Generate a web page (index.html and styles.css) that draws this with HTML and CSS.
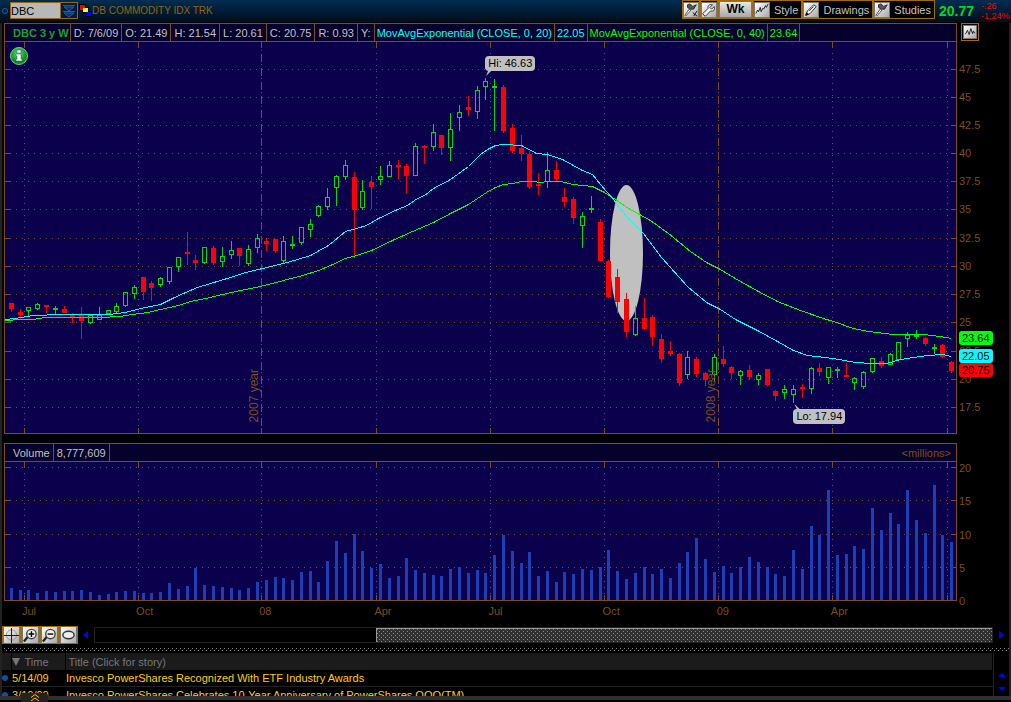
FILE: index.html
```html
<!DOCTYPE html>
<html lang="en">
<head>
<meta charset="utf-8">
<title>DBC Chart</title>
<link rel="stylesheet" href="styles.css">
</head>
<body>
<header class="toolbar">
  <span class="link-dot"></span>
  <div class="symbol">
    <input class="symbol-input" type="text" value="DBC" aria-label="Symbol">
    <button class="symbol-drop" aria-label="Symbol list"><svg width="14" height="14" viewBox="0 0 14 14"><path d="M1 1.500h12M1 7.500h12" stroke="#1560b0"/><path d="M2 3h10L7 7zM2 9h10l-5 4z" fill="#0a3468" stroke="#1560b0"/></svg></button>
  </div>
  <svg class="flag" width="13" height="13" viewBox="0 0 13 13"><path d="M0 0h7v3h3v4h3v6H6V9H3V6H0z"/><path fill="#f00" d="M1 1h5v5H1z"/><path fill="#ff0" d="M4 4h5v4H4z"/><path fill="#00f" d="M7 8h5v4H7z"/><path fill="#f00" d="M1 1h5v3H4v2H1z"/></svg>
  <span class="name">DB COMMODITY IDX TRK</span>
  <div class="tools">
    <button class="tool" aria-label="Chart settings"><svg class="face" width="16" height="16" viewBox="0 0 16 16"><use href="#brush"/><path d="M10 11l5 4M11 15l4-6" stroke="#000"/></svg></button>
    <button class="tool" aria-label="Properties"><svg class="face" width="16" height="16" viewBox="0 0 16 16"><path d="M2 14l-1-2 6-6c-1-3 2-5 5-4l-3 3 2 2 3-3c1 4-1 6-4 5l-6 6z" fill="#eee" stroke="#222"/></svg></button>
    <button class="tool wk"><span>Wk</span></button>
    <button class="tool"><svg class="face" width="16" height="16" viewBox="0 0 16 16"><path d="M1 12l2-4 1 2 2-5 1 5 2-4 1 1 2-4 1 2 2-4" fill="none" stroke="#111"/></svg><span>Style</span></button>
    <button class="tool"><svg class="face" width="16" height="16" viewBox="0 0 16 16"><path d="M2 14l2-5 7-7 3 2-7 8z" fill="#f4f4f4" stroke="#222"/><path d="M2 14l1-3 2 2zM6 9l5-5" stroke="#111"/></svg><span>Drawings</span></button>
    <button class="tool"><svg class="face" width="16" height="16" viewBox="0 0 16 16"><g id="brush"><path d="M4 2l3-1 3 3 4-2-3 5-4 0-3-2z" fill="#555" stroke="#222"/><path d="M6 7l-5 7 1 1 6-7z" fill="#fff" stroke="#444"/></g></svg><span>Studies</span></button>
  </div>
  <span class="last">20.77</span>
  <span class="change"><span>-.26</span><span>-1.24%</span></span>
</header>

<main class="workspace">
  <section class="row">
    <div class="panel">
      <div class="legend">
        <b class="title">DBC 3 y W</b><span>D: 7/6/09</span><span>O: 21.49</span><span>H: 21.54</span><span>L: 20.61</span><span>C: 20.75</span><span>R: 0.93</span><span>Y:</span><span class="cyan">MovAvgExponential (CLOSE, 0, 20)</span><span class="cyan">22.05</span><span class="green">MovAvgExponential (CLOSE, 0, 40)</span><span class="green">23.64</span>
      </div>
      <div class="plot price">
        <svg id="price" viewBox="5 42 951 391" preserveAspectRatio="none"></svg>
        <span class="year y07">2007 year</span>
        <span class="year y08">2008 year</span>
        <svg class="info" width="18" height="18" viewBox="0 0 18 18"><defs><radialGradient id="g" cx=".45" cy=".35"><stop offset="0" stop-color="#5fe070"/><stop offset="1" stop-color="#0a8a20"/></radialGradient></defs><circle cx="9" cy="9" r="8.500" fill="url(#g)" stroke="#6fd080"/><path d="M7 3h4v3H7zM6 7h5v5h1v2H6v-2h1V9H6z" fill="#fff" stroke="#064" stroke-width=".5"/></svg>
        <span class="note hi">Hi: 46.63</span>
        <span class="note lo">Lo: 17.94</span>
      </div>
    </div>
    <div class="axis">
      <button class="tool corner" aria-label="Chart style"><svg class="face" width="14" height="14" viewBox="0 0 14 14"><path d="M1 9h1l2-4 2 5 2-7 2 6 1-3 1 2h1" fill="none" stroke="#111"/></svg></button>
      <svg id="price-axis" width="52" height="391" viewBox="957 42 52 391"></svg>
    </div>
  </section>

  <section class="row volume-row">
    <div class="panel">
      <div class="legend volume-legend"><span>Volume</span><span>8,777,609</span><span class="unit">&lt;millions&gt;</span></div>
      <div class="plot volume"><svg id="volume" viewBox="5 462 951 138" preserveAspectRatio="none"></svg></div>
    </div>
    <div class="axis"><svg id="volume-axis" width="52" height="158" viewBox="957 443 52 158"></svg></div>
  </section>

  <div class="months"><span>Jul</span><span>Oct</span><span>08</span><span>Apr</span><span>Jul</span><span>Oct</span><span>09</span><span>Apr</span></div>

  <div class="scroller">
    <button class="tool small" aria-label="Crosshair"><svg class="face" width="17" height="16" viewBox="0 0 16 16"><circle cx="8" cy="8" r="5.500" fill="none" stroke="#999"/><path d="M8 0v16M0 8h16" stroke="#111" shape-rendering="crispEdges"/></svg></button>
    <button class="tool small" aria-label="Zoom in"><svg class="face" width="17" height="16" viewBox="0 0 16 16"><path d="M1 15l4-5" stroke="#222" stroke-width="2.500"/><circle cx="9" cy="7" r="5" fill="#eee" stroke="#444" stroke-width="1.500"/><path d="M6 7h6M9 4v6" stroke="#000" stroke-width="1.500"/></svg></button>
    <button class="tool small" aria-label="Zoom out"><svg class="face" width="17" height="16" viewBox="0 0 16 16"><path d="M1 15l4-5" stroke="#222" stroke-width="2.500"/><circle cx="9" cy="7" r="5" fill="#eee" stroke="#444" stroke-width="1.500"/><path d="M6 7h6" stroke="#000" stroke-width="1.500"/></svg></button>
    <button class="tool small" aria-label="Fit"><svg class="face" width="17" height="16" viewBox="0 0 16 16"><ellipse cx="8" cy="8" rx="6" ry="4" fill="#eee" stroke="#333" stroke-width="1.500"/></svg></button>
    <button class="arrow" aria-label="Scroll left"><svg width="6" height="8" viewBox="0 0 6 8"><path d="M5 0v8L0 4z" fill="#00f"/></svg></button>
    <div class="track"><svg class="thumb"><defs><pattern id="dots" width="4" height="4" patternUnits="userSpaceOnUse"><path fill="#888" d="M0 0h1v1H0zM2 2h1v1H2z"/></pattern></defs><rect width="100%" height="100%" fill="url(#dots)"/></svg></div>
    <button class="arrow right" aria-label="Scroll right"><svg width="6" height="8" viewBox="0 0 6 8"><path d="M1 0v8l5-4z" fill="#00f"/></svg></button>
  </div>
  <svg class="splitter"><rect width="100%" height="3" fill="url(#dots)"/></svg>

  <div class="news">
    <table>
      <thead><tr><th class="c-dot"></th><th class="c-time"><svg width="8" height="8" viewBox="0 0 8 8"><path d="M0 0h8L4 8z" fill="#777"/></svg>Time</th><th>Title (Click for story)</th></tr></thead>
      <tbody>
        <tr><td class="c-dot"><i class="bullet"></i></td><td class="c-time">5/14/09</td><td><a href="#a">Invesco PowerShares Recognized With ETF Industry Awards</a></td></tr>
        <tr><td class="c-dot"><i class="bullet"></i></td><td class="c-time">3/10/09</td><td><a href="#b">Invesco PowerShares Celebrates 10-Year Anniversary of PowerShares QQQ(TM)</a></td></tr>
      </tbody>
    </table>
    <div class="news-scroll">
      <button class="arrow" aria-label="Up"><svg width="6" height="4" viewBox="0 0 6 4"><path d="M3 0l3 3v1H0V3z" fill="#00f"/></svg></button>
      <button class="arrow" aria-label="Down"><svg width="6" height="4" viewBox="0 0 6 4"><path d="M3 4l3-3V0H0v1z" fill="#00f"/></svg></button>
    </div>
  </div>
</main>
<footer class="dock"><button class="expand" aria-label="Expand"><svg width="8" height="7" viewBox="0 0 8 7"><path d="M0 3.500l4-3 4 3M0 7l4-3 4 3" fill="none" stroke="#fb1"/></svg></button></footer>
<script src="chart.js"></script>
</body>
</html>
```
FILE: styles.css
```css
* { box-sizing: border-box; }
body {
  margin: 0;
  min-height: 100vh;
  display: flex;
  flex-direction: column;
  background: #000;
  color: #c0c0c0;
  font: 11px/16px "Liberation Sans", Arial, sans-serif;
  overflow: hidden;
}
button { font: inherit; color: inherit; margin: 0; padding: 0; border: 0; background: none; }
svg { display: block; }

.toolbar {
  display: flex;
  align-items: center;
  height: 23px;
  padding: 0 2px 1px;
  background: linear-gradient(#002d52, #000c1a);
  border-bottom: 1px solid #000;
}
.link-dot { width: 6px; height: 6px; border: 1px solid #1560b0; border-radius: 50%; margin-right: 2px; }
.symbol { display: flex; height: 17px; border: 1px solid #9a6408; }
.symbol-input { width: 49px; padding: 0; border: 0; background: #b8b8b8; color: #000; font: 11px "Liberation Sans", Arial, sans-serif; }
.symbol-drop { display: grid; place-items: center; width: 17px; border-left: 1px solid #9a6408; background: #021c38; }
.flag { margin-left: 1px; }
.name { color: #96640e; font-size: 10px; }
.tools { display: flex; margin-left: auto; align-self: flex-start; }
.tool {
  display: flex;
  align-items: center;
  height: 19px;
  border: 1px solid #a06a08;
  background: #000;
  color: #c4c4c4;
}
.face { flex: none; border: 1px solid #777; background: linear-gradient(135deg, #fff, #a8a8a8); }
.tool > span { padding: 0 3px 0 4px; }
.tool.wk > span { width: 33px; padding: 0; line-height: 15px; background: linear-gradient(#e8e8e8, #a8a8a8); color: #000; font-size: 12px; font-weight: bold; border: 1px solid #777; }
.last { margin-left: 4px; width: 38px; color: #00d828; font-size: 14px; font-weight: bold; }
.change { display: flex; flex-direction: column; width: 32px; padding-left: 4px; color: #f00; font-size: 9px; line-height: 10px; }

.workspace { padding-left: 2px; border: solid #222; border-width: 0 2px; }
.row { display: flex; }
.panel { flex: 1; border: 1px solid #7d4e14; }
.legend {
  display: flex;
  height: 18px;
  border-bottom: 1px solid #7d4e14;
  background: #06002c;
  line-height: 19px;
  white-space: nowrap;
}
.legend > * { padding: 0 3px; border-right: 1px solid #7d4e14; }
.legend > .title { padding: 0 1px 0 8px; color: #18a030; }
.legend > .cyan, .legend > .green { padding: 0 2px; }
.legend .cyan { color: #00ffff; }
.legend .green { color: #00ff00; }
.plot { position: relative; background: #0a004c; }
.plot > svg:first-child { width: 100%; }
.price > svg:first-child { height: 391px; }
.volume > svg { height: 138px; }
.axis { width: 52px; }
.corner { width: 18px; height: 18px; margin: 0 0 1px 4px; background: #000; }
.corner .face { margin: 0 1px; }
.axis svg { overflow: visible; }
.axis svg text { font: 11px "Liberation Sans", Arial, sans-serif; }

.info { position: absolute; left: 5px; top: 5px; }
.year { position: absolute; bottom: 11px; writing-mode: vertical-rl; transform: rotate(180deg); color: #7d4e14; font-size: 12px; }
.y07 { left: 25.3%; }
.y08 { left: 73.4%; }
.note { position: absolute; padding: 0 3px; border-radius: 4px; background: #c0c0c0; color: #000; line-height: 15px; }
.note::after { content: ""; position: absolute; width: 7px; height: 6px; background: #c0c0c0; }
.hi { left: 50.5%; top: 14px; }
.hi::after { left: 1px; bottom: -5px; clip-path: polygon(0 100%, 30% 0, 80% 0); }
.lo { left: 82.9%; top: 367px; }
.lo::after { left: 1px; top: -5px; clip-path: polygon(0 0, 40% 100%, 90% 100%); }

.volume-row { margin-top: 9px; }
.volume-row .legend > :first-child { padding: 0 3px 0 8px; }
.legend > .unit { margin-left: auto; padding-right: 5px; border: 0; color: #7d4e14; }

.months {
  display: grid;
  grid-template-columns: 114fr 123fr 115fr 114fr 114fr 114fr 114fr 126fr;
  padding: 2px 52px 0 18px;
  height: 24px;
  color: #7d4e14;
}

.scroller { display: flex; align-items: center; height: 20px; margin-left: -2px; }
.small { height: 18px; }
.small .face { border-width: 0 1px; }
.arrow { display: grid; place-items: center; width: 16px; height: 16px; }
.track { flex: 1; display: flex; justify-content: flex-end; height: 16px; border: 1px solid #222; }
.thumb { width: 68.7%; height: 14px; background: #303030; border-left: 1px solid #999; border-top: 1px solid #999; }
.splitter { width: 100%; height: 3px; margin: 3px 0 2px; }

.news { display: flex; height: 43px; margin-left: -2px; overflow: hidden; }
table { flex: 1; border-collapse: collapse; table-layout: fixed; }
th { height: 17px; padding: 0 3px; background: #1b1b1b; color: #777; font-weight: normal; text-align: left; border-right: 1px solid #000; }
th svg { display: inline-block; margin-right: 5px; }
td { height: 16px; padding: 0 1px; color: #fc1; border-bottom: 1px solid #222; }
td a { color: #fc1; text-decoration: none; }
.c-dot { width: 9px; padding: 0; }
.c-time { width: 54px; }
th.c-time { padding: 0; }
.bullet { display: block; width: 6px; height: 6px; border-radius: 50%; background: #1050a0; }
.news-scroll { display: flex; flex-direction: column; justify-content: flex-end; width: 16px; border-left: 1px solid #222; }
.news-scroll .arrow { height: 14px; }
.dock { position: relative; height: 6px; border-top: 4px solid #303030; }
.expand { position: absolute; left: 21px; bottom: 0; width: 27px; height: 9px; display: grid; place-items: center; background: #222; border-radius: 3px 3px 0 0; }
```
FILE: chart.js
```js
// x, high, low, body top, body bottom, direction, volume top
const bars = `
11 303 312 303 309 d 588|20 309 317 312 315 d 590|28 307 316 307 311 u 590|37 303 310 304 309 u 593|46 305 313 305 307 d 591|55 306 314 308 310 u 592
64 306 313 309 313 d 591|72 313 323 315 317 d 591|81 307 339 314 321 d 590|90 315 324 315 323 u 592|99 307 320 315 320 u 595|108 310 314 310 314 u 594
116 303 313 306 312 u 592|125 292 307 292 306 u 591|134 285 299 287 294 u 591|143 277 300 277 292 d 593|151 281 301 283 288 d 593|160 277 287 278 285 u 592
169 267 284 267 282 u 583|178 257 272 257 267 u 589|187 232 265 252 254 d 586|195 255 270 260 263 d 568|204 247 264 247 263 u 585|213 246 265 248 263 d 586
222 247 267 256 262 u 587|231 241 259 250 255 u 588|239 248 266 248 256 d 590|248 245 266 249 264 u 588|257 234 253 238 248 u 582|266 238 251 241 244 d 580
275 239 253 239 251 d 577|283 236 263 241 261 u 578|292 236 249 244 246 u 580|301 227 245 227 243 u 572|310 219 237 224 230 u 571|318 205 217 206 216 u 582
327 188 210 197 207 u 561|336 175 206 176 188 u 541|345 160 180 165 177 u 553|354 172 258 177 210 d 534|362 180 210 191 208 u 551|371 176 209 182 187 d 568
380 166 185 176 180 u 564|389 161 177 165 177 u 578|398 160 179 165 167 d 576|406 164 193 166 176 d 558|415 143 176 146 176 u 570|424 145 164 146 148 d 573
433 124 151 132 147 u 575|441 135 155 135 148 d 576|450 113 161 129 148 u 569|459 105 131 112 118 u 567|468 96 116 107 110 d 573|477 86 119 90 112 u 570
485 78 100 81 87 u 573|494 79 131 86 88 u 555|503 85 133 87 131 d 535|512 124 153 128 151 d 551|521 135 161 148 154 d 563|529 151 189 154 187 d 552
538 173 195 184 186 d 576|547 152 188 170 182 u 571|556 161 181 170 179 d 582|564 188 207 197 202 d 572|573 197 224 199 218 d 574|582 212 248 216 226 u 569
591 196 213 208 210 u 570|600 219 261 222 261 d 567|608 260 298 261 297 d 550|617 269 313 277 302 d 571|626 293 337 299 332 d 579|635 306 336 318 335 u 573
644 298 330 318 329 d 567|652 315 346 317 337 d 574|661 334 363 339 359 d 569|670 341 356 351 354 d 578|679 353 386 354 383 d 563|687 351 379 357 375 u 552
696 357 377 359 374 d 538|705 372 386 373 380 d 559|714 354 381 357 375 u 572|723 346 367 359 364 d 566|731 366 379 367 373 d 573|740 370 385 371 376 u 567
749 365 380 370 377 d 557|758 373 385 375 380 u 562|767 369 386 369 385 d 567|775 390 401 391 396 d 574|784 385 399 389 393 u 576|793 385 403 389 395 u 550
802 384 398 387 389 d 569|811 367 394 368 389 u 526|819 363 376 368 372 d 535|828 367 384 367 378 u 490|837 367 378 369 371 u 555|846 363 377 375 377 d 554
854 377 390 378 383 u 546|863 371 389 372 387 u 549|872 358 373 358 372 u 508|881 357 368 361 366 d 530|890 353 365 354 365 u 513|898 342 360 342 360 u 524
907 332 347 335 339 u 490|916 330 339 335 337 u 520|925 337 346 338 344 d 533|934 344 354 347 349 u 485|942 344 358 345 357 d 535|951 361 373 362 371 d 542`
  .trim().split(/[|\n]/).map(r => r.split(' ').map(v => isNaN(v) ? v : +v));

const ema20 = '5,319 15,318 33,315 60,314 108,314 125,312 140,308 160,304 172,298 185,292 197,287 210,283 230,277 245,272 258,269 283,263 297,259 310,255 328,245 345,231 356,228 366,225 378,218 397,209 407,205 417,198 424,195 433,188 450,179 468,166 480,154 487,149 495,145 503,144 521,145 536,153 547,154 562,159 582,170 592,174 600,184 613,199 626,216 643,233 661,257 687,286 706,302 720,309 735,319 757,330 777,341 793,350 807,355 833,358 855,362 872,363 886,363 900,359 913,357 927,355 942,354 951,356';
const ema40 = '5,320 20,319 32,319 45,317 100,317 120,316 132,314 147,312 160,309 178,305 190,301 205,298 222,294 240,290 260,286 283,280 302,275 318,270 330,265 345,258 356,255 371,250 392,240 412,231 433,222 450,213 468,204 486,192 495,187 503,184 512,183 521,181 533,181 540,182 547,181 560,181 573,184 592,186 604,192 615,199 628,208 650,220 668,233 690,251 706,262 718,268 740,281 758,291 777,301 800,310 823,318 833,321 853,328 868,331 893,334 923,334 940,336 951,338';

const BROWN = '#7d4e14';
const months = [24, 138, 261, 376, 490, 604, 718, 832, 947];
const rect = (x, y, w, h) => `M${x} ${y}h${w}v${h}h${-w}z`;

function grid(rows, top, bottom, years) {
  let dots = '', ticks = '';
  rows.forEach(y => {
    for (let x = 16; x < 951; x += 6) dots += rect(x, y, 1, 1);
    ticks += rect(5, y, 6, 1) + rect(951, y, 5, 1);
  });
  months.forEach(x => {
    ticks += rect(x, top, 1, 6) + rect(x, bottom - 5, 1, 5);
    if (years.includes(x)) {
      for (let y = top + 8; y < bottom - 6; y += 14) ticks += rect(x, y, 1, 1) + rect(x, y + 4, 1, 8);
    } else {
      for (let y = top + 11; y < bottom - 6; y += 6) dots += rect(x, y, 1, 1);
    }
  });
  return `<path fill="${BROWN}" d="${dots}${ticks}"/>`;
}

let red = '', green = '', vol = '';
bars.forEach(([x, hi, lo, top, bot, dir, v]) => {
  if (dir === 'd') {
    red += rect(x, hi, 1, lo - hi);
    red += rect(x - 2, top, 5, bot - top);
  } else {
    if (top > hi) green += rect(x, hi, 1, top - hi);
    if (lo > bot) green += rect(x, bot, 1, lo - bot);
    green += rect(x - 2, top, 5, bot - top);
    if (bot - top > 2) green += rect(x - 1, top + 1, 3, bot - top - 2);
  }
  vol += rect(x - 1, v, 3, 600 - v);
});

const priceRows = [69, 97, 125, 153, 181, 209, 238, 266, 294, 322, 351, 379, 407];
document.getElementById('price').innerHTML = `<g shape-rendering="crispEdges">
  ${grid(priceRows, 42, 433, [261, 718])}
  <ellipse cx="626.5" cy="253" rx="16.5" ry="68" fill="#c0c0c0" shape-rendering="auto"/>
  <path fill="#f00" d="${red}"/><path fill="#0d0" fill-rule="evenodd" d="${green}"/>
  <g fill="none" transform="translate(0.5 0.5)"><polyline points="${ema40}" stroke="#0f0"/><polyline points="${ema20}" stroke="#0ff"/></g></g>`;

const volRows = [467, 500, 534, 567];
document.getElementById('volume').innerHTML =
  `<g shape-rendering="crispEdges">${grid(volRows, 462, 600, [])}<path fill="#1c40b4" d="${vol}"/></g>`;

document.getElementById('price-axis').innerHTML = priceRows.map((y, i) =>
  `<text x="959" y="${y + 4}" fill="${BROWN}">${47.5 - i * 2.5}</text>`).join('') +
  [['23.64', 331, '#0f0'], ['22.05', 349, '#0ff'], ['20.75', 363, '#f00']].map(([t, y, c]) =>
  `<rect x="959" y="${y}" width="34" height="14" rx="3" fill="${c}"/><text x="962" y="${y + 11}">${t}</text>`).join('');

document.getElementById('volume-axis').innerHTML = [...volRows, 600].map((y, i) =>
  `<text x="959" y="${y + 5}" fill="${BROWN}">${20 - i * 5}</text>`).join('');
```
